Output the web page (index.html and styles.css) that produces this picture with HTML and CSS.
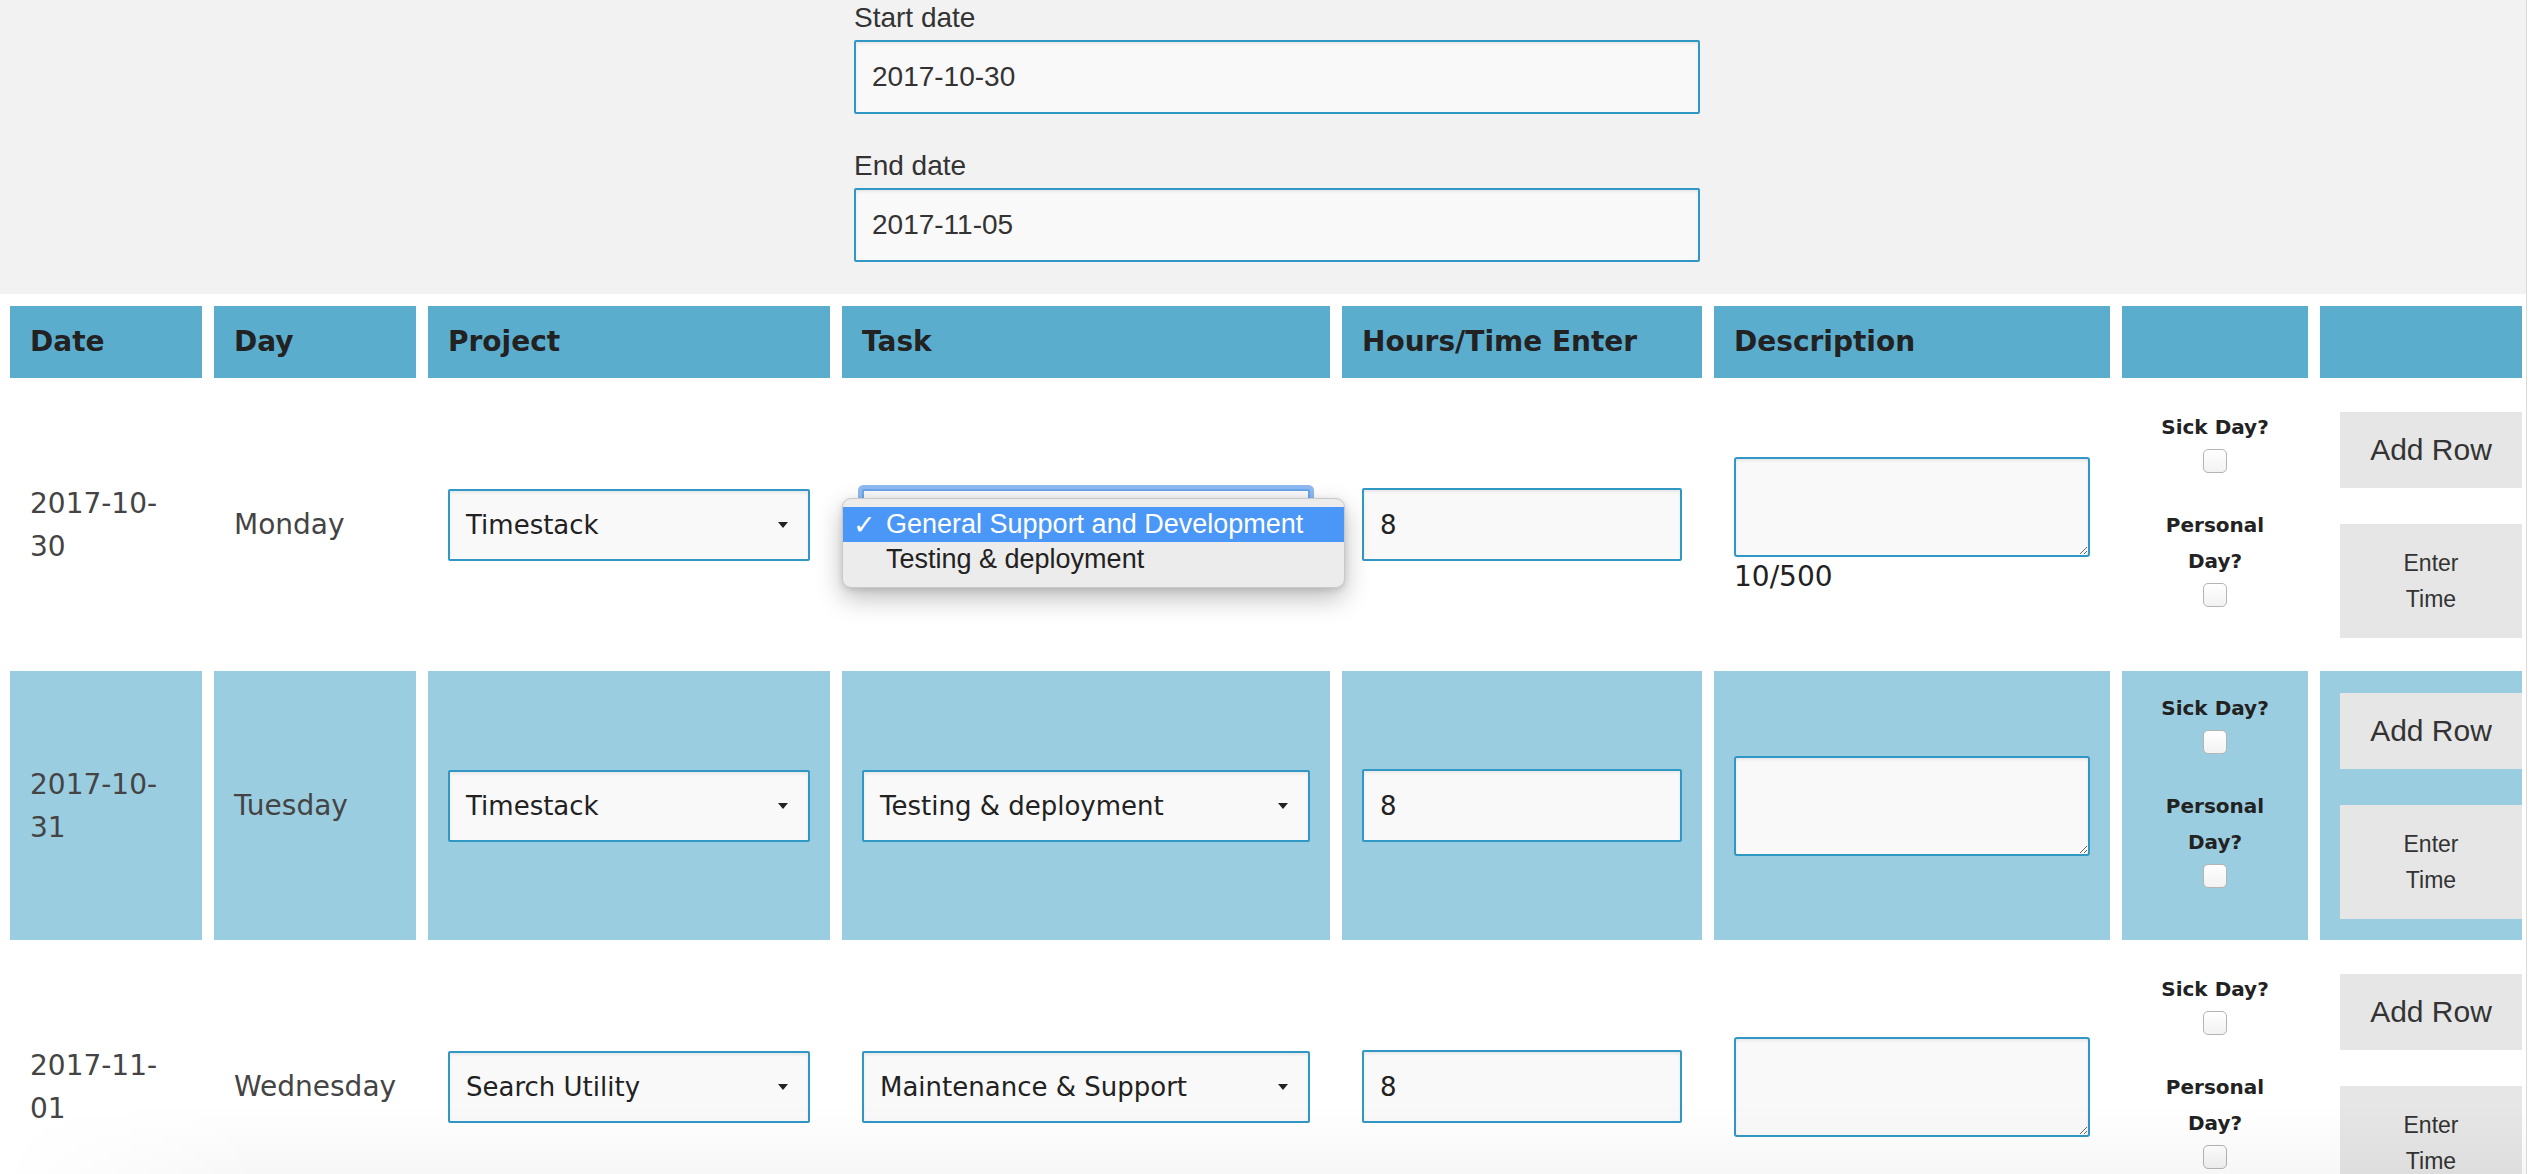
FILE: index.html
```html
<!DOCTYPE html>
<html lang="en">
<head>
<meta charset="utf-8">
<title>Timesheet</title>
<link rel="stylesheet" href="styles.css">
</head>
<body>
<div class="page">
  <section class="filters">
    <div class="filter-form">
      <div class="form-group">
        <label class="form-label" for="start-date">Start date</label>
        <input class="form-input" id="start-date" type="text" value="2017-10-30">
      </div>
      <div class="form-group">
        <label class="form-label" for="end-date">End date</label>
        <input class="form-input" id="end-date" type="text" value="2017-11-05">
      </div>
    </div>
  </section>

  <table class="timesheet">
    <thead>
      <tr>
        <th class="col-date">Date</th>
        <th class="col-day">Day</th>
        <th class="col-project">Project</th>
        <th class="col-task">Task</th>
        <th class="col-hours">Hours/Time Enter</th>
        <th class="col-desc">Description</th>
        <th class="col-check"></th>
        <th class="col-actions"></th>
      </tr>
    </thead>
    <tbody>
      <tr>
        <td class="cell-text">2017-10-<wbr>30</td>
        <td class="cell-text">Monday</td>
        <td><div class="select"><span>Timestack</span><span class="caret"></span></div></td>
        <td>
          <div class="select-wrap">
            <div class="select is-focused"><span></span><span class="caret"></span></div>
            <div class="popup">
              <div class="popup-item is-active"><span class="tick">✓</span>General Support and Development</div>
              <div class="popup-item">Testing &amp; deployment</div>
            </div>
          </div>
        </td>
        <td><input class="hours" type="text" value="8"></td>
        <td><textarea class="desc"></textarea><div class="counter">10/500</div></td>
        <td class="cell-check">
          <span class="check-label">Sick Day?</span><input class="checkbox" type="checkbox">
          <span class="check-label">Personal Day?</span><input class="checkbox" type="checkbox">
        </td>
        <td class="cell-actions">
          <button class="btn btn-add" type="button">Add Row</button>
          <button class="btn btn-enter" type="button">Enter<br>Time</button>
        </td>
      </tr>
      <tr class="row-alt">
        <td class="cell-text">2017-10-<wbr>31</td>
        <td class="cell-text">Tuesday</td>
        <td><div class="select"><span>Timestack</span><span class="caret"></span></div></td>
        <td><div class="select"><span>Testing &amp; deployment</span><span class="caret"></span></div></td>
        <td><input class="hours" type="text" value="8"></td>
        <td><textarea class="desc"></textarea></td>
        <td class="cell-check">
          <span class="check-label">Sick Day?</span><input class="checkbox" type="checkbox">
          <span class="check-label">Personal Day?</span><input class="checkbox" type="checkbox">
        </td>
        <td class="cell-actions">
          <button class="btn btn-add" type="button">Add Row</button>
          <button class="btn btn-enter" type="button">Enter<br>Time</button>
        </td>
      </tr>
      <tr>
        <td class="cell-text">2017-11-<wbr>01</td>
        <td class="cell-text">Wednesday</td>
        <td><div class="select"><span>Search Utility</span><span class="caret"></span></div></td>
        <td><div class="select"><span>Maintenance &amp; Support</span><span class="caret"></span></div></td>
        <td><input class="hours" type="text" value="8"></td>
        <td><textarea class="desc"></textarea></td>
        <td class="cell-check">
          <span class="check-label">Sick Day?</span><input class="checkbox" type="checkbox">
          <span class="check-label">Personal Day?</span><input class="checkbox" type="checkbox">
        </td>
        <td class="cell-actions">
          <button class="btn btn-add" type="button">Add Row</button>
          <button class="btn btn-enter" type="button">Enter<br>Time</button>
        </td>
      </tr>
    </tbody>
  </table>
</div>
<div class="bottom-shade"></div>
</body>
</html>
```

FILE: styles.css
```css
* {
  box-sizing: border-box;
}

html, body {
  margin: 0;
  padding: 0;
  background: #ffffff;
  overflow: hidden;
}

body {
  font-family: "DejaVu Sans", Verdana, sans-serif;
  color: #444;
}

.page {
  width: 2527px;
  border-right: 1px solid #dadada;
  overflow: hidden;
  min-height: 1174px;
}

/* ---------- top filter form ---------- */
.filters {
  background: #f2f2f2;
  height: 294px;
  display: grid;
  grid-template-columns: 854px 846px;
  align-content: start;
}

.filter-form {
  grid-column: 2;
}

.form-group {
  margin-bottom: 34px;
}

.form-label {
  display: block;
  font-family: "Liberation Sans", Arial, sans-serif;
  font-size: 28px;
  line-height: 36px;
  color: #333;
  margin-bottom: 4px;
}

.form-input {
  display: block;
  width: 846px;
  height: 74px;
  margin: 0;
  padding: 0 16px;
  border: 2px solid #3197c4;
  border-radius: 2px;
  background: #f9f9f9;
  box-shadow: inset 0 2px 3px rgba(0, 0, 0, 0.07);
  font-family: "Liberation Sans", Arial, sans-serif;
  font-size: 28px;
  color: #333;
  outline: none;
}

/* ---------- table ---------- */
.timesheet {
  border-collapse: separate;
  border-spacing: 12px;
  table-layout: fixed;
  width: 2536px;
  margin-left: -2px;
}

.timesheet th {
  height: 72px;
  padding: 0 20px;
  background: #5badce;
  color: #222;
  font-size: 28px;
  font-weight: bold;
  line-height: 42px;
  text-align: left;
  vertical-align: middle;
  white-space: nowrap;
}

.col-date { width: 192px; }
.col-day { width: 202px; }
.col-project { width: 402px; }
.col-task { width: 488px; }
.col-hours { width: 360px; }
.col-desc { width: 396px; }
.col-check { width: 186px; }
.col-actions { width: 202px; }

.timesheet td {
  height: 269px;
  padding: 0 20px;
  vertical-align: middle;
}

.row-alt td {
  background: #9bcde0;
}

.cell-text {
  font-size: 28px;
  line-height: 43px;
  color: #444;
}

/* select look-alike */
.select-wrap {
  position: relative;
}

.select {
  display: flex;
  align-items: center;
  justify-content: space-between;
  height: 72px;
  padding: 0 20px 0 16px;
  border: 2px solid #3197c4;
  border-radius: 2px;
  background: #f9f9f9;
  box-shadow: inset 0 2px 3px rgba(0, 0, 0, 0.07);
  font-size: 26px;
  color: #222;
  white-space: nowrap;
  overflow: hidden;
}

.select.is-focused {
  box-shadow: 0 0 0 4px rgba(104, 162, 238, 0.75);
  border-color: #6aa6ee;
}

.caret {
  flex: none;
  width: 0;
  height: 0;
  border-left: 5px solid transparent;
  border-right: 5px solid transparent;
  border-top: 6px solid #222;
}

/* native dropdown popup */
.popup {
  position: absolute;
  top: 9px;
  left: -20px;
  width: 503px;
  padding: 8px 0 10px;
  background: #ececec;
  border: 1px solid #c9c9c9;
  border-radius: 9px;
  box-shadow: 0 10px 26px rgba(0, 0, 0, 0.26), 0 2px 6px rgba(0, 0, 0, 0.12);
  font-family: "Liberation Sans", Arial, sans-serif;
  font-size: 27px;
  color: #222;
  z-index: 5;
}

.popup-item {
  display: flex;
  align-items: center;
  height: 35px;
  padding-left: 43px;
  white-space: nowrap;
}

.popup-item.is-active {
  background: #4b97f7;
  color: #fff;
  padding-left: 10px;
}

.tick {
  width: 33px;
  font-family: "DejaVu Sans", sans-serif;
  font-size: 27px;
  font-weight: bold;
}

/* hours */
.hours {
  display: block;
  width: 100%;
  height: 73px;
  margin: 0;
  padding: 0 16px;
  border: 2px solid #3197c4;
  border-radius: 2px;
  background: #f9f9f9;
  box-shadow: inset 0 2px 3px rgba(0, 0, 0, 0.07);
  font-family: "DejaVu Sans", Verdana, sans-serif;
  font-size: 26px;
  color: #222;
  outline: none;
}

/* description */
.desc {
  display: block;
  width: 100%;
  height: 100px;
  margin: 0;
  padding: 8px 12px;
  border: 2px solid #3197c4;
  border-radius: 3px;
  background: #f9f9f9;
  box-shadow: inset 0 2px 3px rgba(0, 0, 0, 0.07);
  resize: both;
  outline: none;
}

.counter {
  margin-top: 4px;
  font-size: 28px;
  line-height: 32px;
  color: #222;
}

/* checkboxes */
.cell-check {
  text-align: center;
}

.check-label {
  display: block;
  font-size: 20px;
  font-weight: bold;
  line-height: 36px;
  color: #222;
}

.checkbox {
  appearance: none;
  -webkit-appearance: none;
  display: block;
  width: 24px;
  height: 24px;
  margin: 4px auto 34px;
  border: 1px solid #b4b4b4;
  border-radius: 5px;
  background: linear-gradient(#ffffff, #f2f2f2);
}

/* buttons */
.timesheet td.cell-actions {
  padding: 0 0 0 20px;
}

.btn {
  display: block;
  width: 182px;
  margin: 0;
  border: none;
  border-radius: 0;
  background: #e6e6e6;
  color: #333;
  font-family: "Liberation Sans", Arial, sans-serif;
  text-align: center;
}

.btn-add {
  height: 76px;
  font-size: 30px;
  margin-bottom: 36px;
}

.btn-enter {
  height: 114px;
  font-size: 23px;
  line-height: 36px;
}

/* faint window shadow at the bottom edge */
.bottom-shade {
  position: fixed;
  left: 0;
  right: 4px;
  bottom: 0;
  height: 70px;
  pointer-events: none;
  background: linear-gradient(to bottom, rgba(0, 0, 0, 0), rgba(0, 0, 0, 0.03));
  -webkit-mask-image: linear-gradient(to right, transparent 0, #000 260px);
  mask-image: linear-gradient(to right, transparent 0, #000 260px);
}
```
